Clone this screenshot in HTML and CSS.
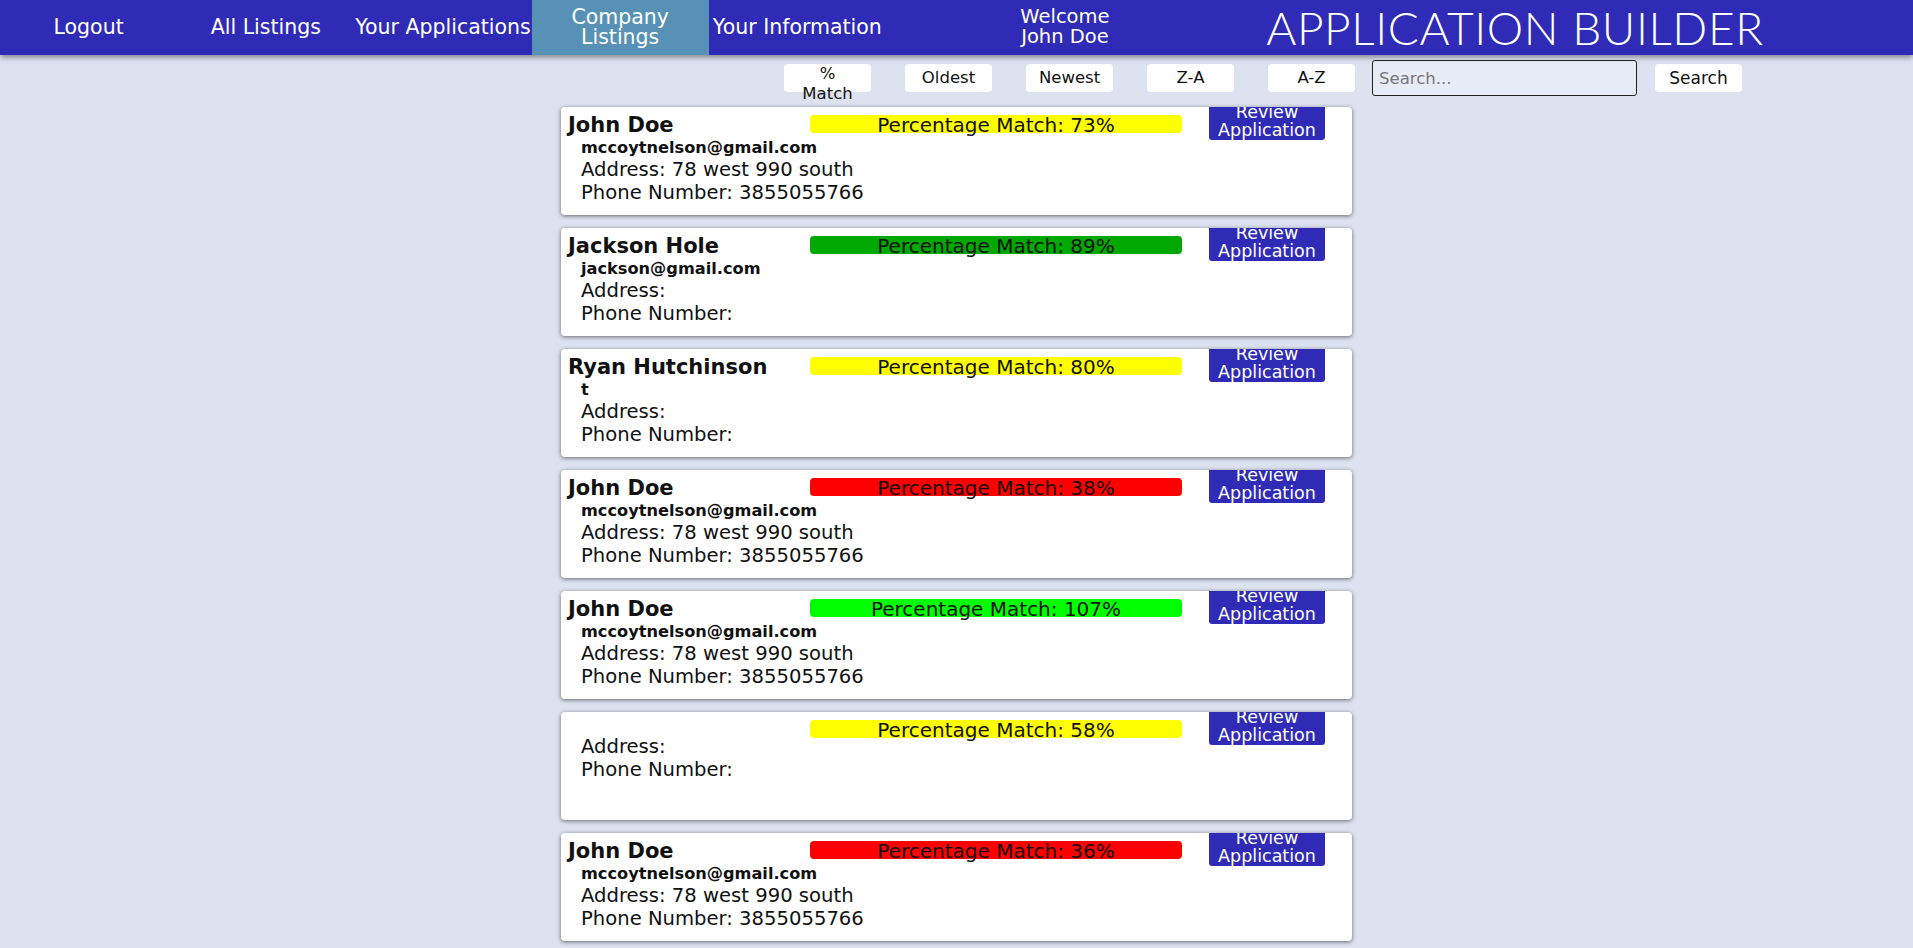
FILE: index.html
```html
<!DOCTYPE html>
<html>
<head>
<meta charset="utf-8">
<link rel="stylesheet" href="styles.css">
</head>
<body>
<header class="topbar">
  <nav class="nav">
    <a class="nav-item">Logout</a>
    <a class="nav-item">All Listings</a>
    <a class="nav-item">Your Applications</a>
    <a class="nav-item active">Company Listings</a>
    <a class="nav-item">Your Information</a>
  </nav>
  <div class="welcome">Welcome<br>John Doe</div>
  <div class="title">APPLICATION BUILDER</div>
</header>

<div class="toolbar">
  <button class="sort-btn match-btn">% Match</button>
  <button class="sort-btn">Oldest</button>
  <button class="sort-btn">Newest</button>
  <button class="sort-btn">Z-A</button>
  <button class="sort-btn">A-Z</button>
  <input class="search-input" type="text" placeholder="Search...">
  <button class="sort-btn search-btn">Search</button>
</div>

<main class="list">
  <div class="card">
    <div class="card-top">
      <div class="name">John Doe</div>
      <div class="match yellow">Percentage Match: 73%</div>
      <div class="review">Review<br>Application</div>
    </div>
    <div class="details">
      <div class="email">mccoytnelson@gmail.com</div>
      <div class="line">Address: 78 west 990 south</div>
      <div class="line">Phone Number: 3855055766</div>
    </div>
  </div>

  <div class="card">
    <div class="card-top">
      <div class="name">Jackson Hole</div>
      <div class="match green">Percentage Match: 89%</div>
      <div class="review">Review<br>Application</div>
    </div>
    <div class="details">
      <div class="email">jackson@gmail.com</div>
      <div class="line">Address: </div>
      <div class="line">Phone Number: </div>
    </div>
  </div>

  <div class="card">
    <div class="card-top">
      <div class="name">Ryan Hutchinson</div>
      <div class="match yellow">Percentage Match: 80%</div>
      <div class="review">Review<br>Application</div>
    </div>
    <div class="details">
      <div class="email">t</div>
      <div class="line">Address: </div>
      <div class="line">Phone Number: </div>
    </div>
  </div>

  <div class="card">
    <div class="card-top">
      <div class="name">John Doe</div>
      <div class="match red">Percentage Match: 38%</div>
      <div class="review">Review<br>Application</div>
    </div>
    <div class="details">
      <div class="email">mccoytnelson@gmail.com</div>
      <div class="line">Address: 78 west 990 south</div>
      <div class="line">Phone Number: 3855055766</div>
    </div>
  </div>

  <div class="card">
    <div class="card-top">
      <div class="name">John Doe</div>
      <div class="match lime">Percentage Match: 107%</div>
      <div class="review">Review<br>Application</div>
    </div>
    <div class="details">
      <div class="email">mccoytnelson@gmail.com</div>
      <div class="line">Address: 78 west 990 south</div>
      <div class="line">Phone Number: 3855055766</div>
    </div>
  </div>

  <div class="card">
    <div class="card-top">
      <div class="name"></div>
      <div class="match yellow">Percentage Match: 58%</div>
      <div class="review">Review<br>Application</div>
    </div>
    <div class="details">
      <div class="email"></div>
      <div class="line">Address: </div>
      <div class="line">Phone Number: </div>
    </div>
  </div>

  <div class="card">
    <div class="card-top">
      <div class="name">John Doe</div>
      <div class="match red">Percentage Match: 36%</div>
      <div class="review">Review<br>Application</div>
    </div>
    <div class="details">
      <div class="email">mccoytnelson@gmail.com</div>
      <div class="line">Address: 78 west 990 south</div>
      <div class="line">Phone Number: 3855055766</div>
    </div>
  </div>
</main>
</body>
</html>
```

FILE: styles.css
```css
html, body {
  margin: 0;
  padding: 0;
}
body {
  background: #dde2f0;
  font-family: "DejaVu Sans", "Noto Sans", sans-serif;
  color: #111;
}

/* header */
.topbar {
  display: flex;
  align-items: stretch;
  height: 55px;
  background: #2f2bb6;
  color: #fff;
  box-shadow: 0 2px 6px rgba(0, 0, 0, 0.45);
  position: relative;
  z-index: 2;
}
.nav {
  display: flex;
}
.nav-item {
  width: 177.2px;
  display: flex;
  align-items: center;
  justify-content: center;
  text-align: center;
  font-size: 20.5px;
  line-height: 20px;
  padding-bottom: 1px;
  box-sizing: border-box;
  white-space: nowrap;
  cursor: pointer;
}
.nav-item.active {
  background: #5792b6;
  white-space: normal;
  padding: 0 30px 1px;
}
.welcome {
  width: 358px;
  display: flex;
  align-items: center;
  justify-content: center;
  text-align: center;
  font-size: 19.5px;
  line-height: 20px;
  padding-bottom: 1px;
}
.title {
  width: 542px;
  display: flex;
  align-items: center;
  justify-content: center;
  font-family: "Lato", sans-serif;
  font-weight: 300;
  font-size: 46px;
  letter-spacing: 0.6px;
  padding-bottom: 1px;
}

/* toolbar */
.toolbar {
  display: flex;
  align-items: center;
  margin-top: 5px;
  padding-left: 767px;
  height: 36px;
}
.sort-btn {
  width: 87px;
  height: 28px;
  margin: 0 17px;
  border: none;
  border-radius: 4px;
  background: #fff;
  font-family: "DejaVu Sans", sans-serif;
  font-size: 16.5px;
  line-height: 20px;
  color: #111;
  padding: 4px 4px 0;
  display: flex;
  align-items: flex-start;
  justify-content: center;
  box-sizing: border-box;
  text-align: center;
}
.match-btn {
  padding: 0 20px;
}
.search-input {
  width: 265px;
  height: 36px;
  box-sizing: border-box;
  border: 1px solid #222;
  border-radius: 3px;
  background: #e8ecf6;
  font-family: "DejaVu Sans", sans-serif;
  font-size: 16.5px;
  padding: 0 6px;
  margin: 0;
}
.search-input::placeholder {
  color: #777;
}
.search-btn {
  margin-left: 18px;
  font-size: 17px;
}

/* cards */
.list {
  display: flex;
  flex-direction: column;
  align-items: center;
  gap: 13px;
  margin-top: 11px;
  padding-bottom: 20px;
}
.card {
  width: 791px;
  height: 108px;
  box-sizing: border-box;
  background: #fff;
  border-radius: 4px;
  box-shadow: 0 1px 4px rgba(0, 0, 0, 0.55);
  padding: 6px 7px 0;
  overflow: hidden;
}
.card-top {
  display: flex;
  align-items: flex-start;
}
.name {
  width: 242px;
  flex: 0 0 242px;
  font-size: 21px;
  font-weight: bold;
  line-height: 25px;
  white-space: nowrap;
}
.match {
  width: 372px;
  flex: 0 0 372px;
  height: 18px;
  margin: 2px 0 -3px;
  border-radius: 4px;
  text-align: center;
  font-size: 20px;
  line-height: 21px;
  white-space: nowrap;
}
.yellow { background: #ffff00; }
.green { background: #00a800; }
.red { background: #ff0000; }
.lime { background: #00ff00; }

.review {
  width: 116px;
  flex: 0 0 116px;
  height: 33px;
  margin: -6px 0 -20px 27px;
  background: #2f2bb6;
  color: #fff;
  border-radius: 0 0 3px 3px;
  display: flex;
  flex-direction: column;
  justify-content: flex-end;
  align-items: center;
  text-align: center;
  font-size: 17.5px;
  line-height: 18px;
  padding-bottom: 1px;
  box-sizing: border-box;
}
.details {
  padding-left: 13px;
}
.email {
  font-size: 16.2px;
  font-weight: bold;
  line-height: 20px;
}
.email:empty {
  height: 0;
}
.line {
  font-size: 19.6px;
  line-height: 23px;
}
```
